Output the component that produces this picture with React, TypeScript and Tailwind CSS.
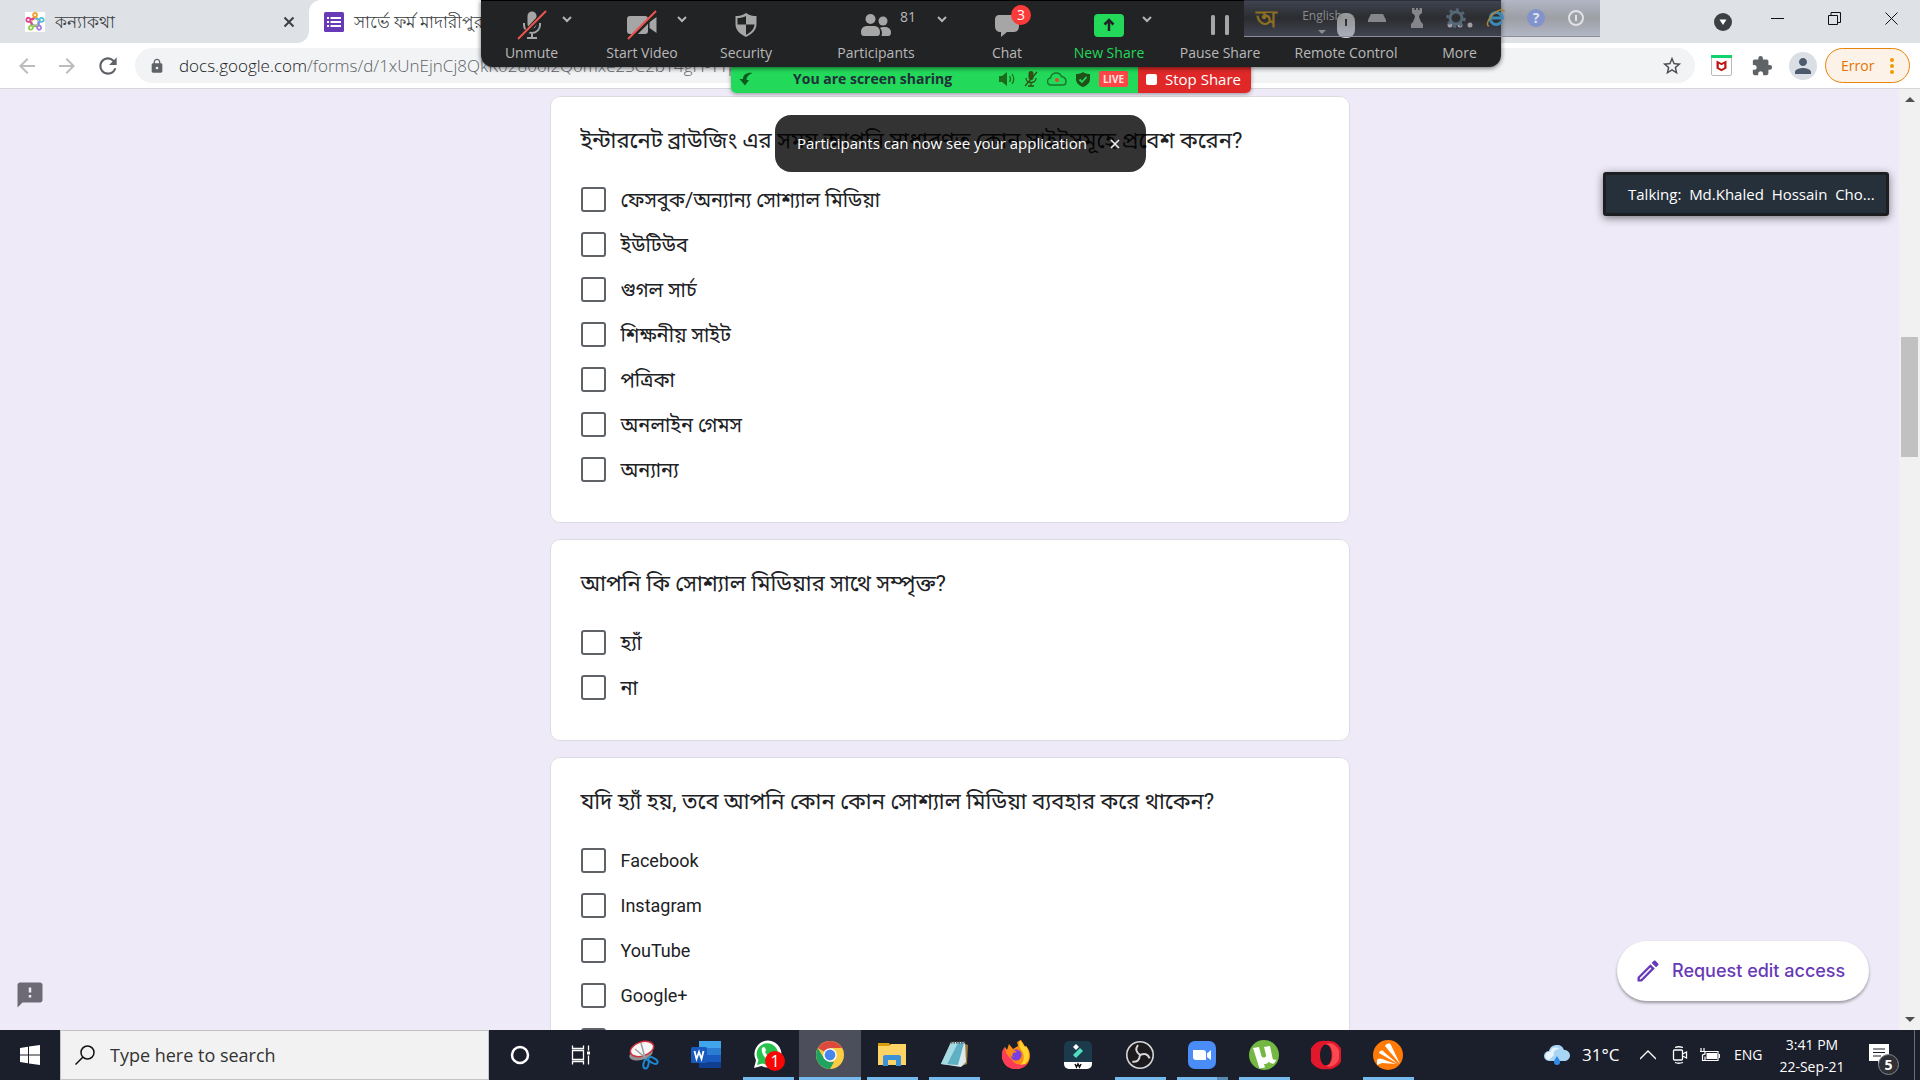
import type { ReactNode } from "react";
import clsx from "clsx";
import {
  MdArrowBack,
  MdArrowForward,
  MdExtension,
  MdFeedback,
  MdLock,
  MdOutlineEdit,
  MdPerson,
  MdRefresh,
  MdStarBorder,
} from "react-icons/md";

type Question = {
  id: string;
  title: string;
  latin?: boolean;
  // ends with an unlabelled free choice
  other?: boolean;
  options: string[];
};

const QUESTIONS: Question[] = [
  {
    id: "sites",
    title: "ইন্টারনেট ব্রাউজিং এর সময় আপনি সাধারণত কোন সাইটসমূহে প্রবেশ করেন?",
    options: [
      "ফেসবুক/অন্যান্য সোশ্যাল মিডিয়া",
      "ইউটিউব",
      "গুগল সার্চ",
      "শিক্ষনীয় সাইট",
      "পত্রিকা",
      "অনলাইন গেমস",
      "অন্যান্য",
    ],
  },
  {
    id: "social",
    title: "আপনি কি সোশ্যাল মিডিয়ার সাথে সম্পৃক্ত?",
    options: ["হ্যাঁ", "না"],
  },
  {
    id: "networks",
    title: "যদি হ্যাঁ হয়, তবে আপনি কোন কোন সোশ্যাল মিডিয়া ব্যবহার করে থাকেন?",
    latin: true,
    other: true,
    options: ["Facebook", "Instagram", "YouTube", "Google+"],
  },
];

/* ---------- Browser ---------- */

function FlowerIcon() {
  const petals = [
    { angle: 0, color: "#f5a02c" },
    { angle: 72, color: "#56bfd6" },
    { angle: 144, color: "#a27be0" },
    { angle: 216, color: "#8fd14a" },
    { angle: 288, color: "#e0408f" },
  ];
  return (
    <svg viewBox="0 0 20 20" className="size-5 bg-white">
      {petals.map((p) => (
        <g key={p.angle} transform={`rotate(${p.angle} 10 10)`} fill="none" stroke={p.color}>
          <circle cx="10" cy="3" r="2" strokeWidth="1.8" />
          <path d="M6.500 8.500Q8.500 7 8.500 5M13.500 8.500Q11.500 7 11.500 5" strokeWidth="2" />
        </g>
      ))}
    </svg>
  );
}

function FormsIcon() {
  return (
    <svg viewBox="0 0 20 20" className="size-5">
      <rect width="20" height="20" rx="1.5" fill="#673ab7" />
      <path d="M3 5h2v2H3zM3 9h2v2H3zM3 13h2v2H3zM6.500 5H17v2H6.500zM6.500 9H17v2H6.500zM6.500 13H17v2H6.500z" fill="#fff" />
    </svg>
  );
}

function TabStrip() {
  return (
    <div className="flex h-[43px] shrink-0 items-stretch bg-white">
      <div className="flex w-[309px] items-center gap-2.5 rounded-br-xl bg-[#dee1e6] pr-2.5 pl-[25px]">
        <FlowerIcon />
        <span className="flex-1 text-[17px] text-[#3c4043]">কন্যাকথা</span>
        <button type="button" aria-label="Close tab" className="p-1">
          <svg viewBox="0 0 12 12" className="size-3" stroke="#3c4043" strokeWidth="2">
            <path d="M1.500 1.500l9 9M10.500 1.500l-9 9" />
          </svg>
        </button>
      </div>
      <div className="bg-[#dee1e6]">
        <div className="flex h-full w-[300px] items-center gap-2.5 overflow-hidden rounded-t-xl bg-white pl-[15px] whitespace-nowrap">
          <FormsIcon />
          <span className="text-[17px] text-[#3c4043]">সার্ভে ফর্ম মাদারীপুর</span>
        </div>
      </div>
      <div className="flex flex-1 items-center justify-end bg-[#dee1e6]">
        <button type="button" aria-label="Search tabs" className="mr-[17px]">
          <svg viewBox="0 0 18 18" className="size-[18px]">
            <circle cx="9" cy="9" r="9" fill="#3c4043" />
            <path d="M5.500 6.500h7L9 12z" fill="#fff" />
          </svg>
        </button>
        <WindowButton label="Minimize">
          <path d="M0 6.500h13" />
        </WindowButton>
        <WindowButton label="Restore">
          <path d="M.5 3.500h9v9h-9zM3 3.500V.5h9.500v10H10" />
        </WindowButton>
        <WindowButton label="Close">
          <path d="M.5.500l12 12M12.500.500l-12 12" />
        </WindowButton>
      </div>
    </div>
  );
}

function WindowButton({ label, children }: { label: string; children: ReactNode }) {
  return (
    <button type="button" aria-label={label} className="flex h-[37px] w-[57px] items-center justify-center self-start">
      <svg viewBox="0 0 13 13" className="size-[13px]" fill="none" stroke="#111" strokeWidth="1">
        {children}
      </svg>
    </button>
  );
}

function Toolbar() {
  return (
    <div className="flex h-[46px] shrink-0 items-center border-b border-[#d5d7da] bg-white pr-2.5 pl-[15px]">
      <button type="button" aria-label="Back" className="mr-4">
        <MdArrowBack className="size-6 text-[#babcbe]" />
      </button>
      <button type="button" aria-label="Forward" className="mr-4">
        <MdArrowForward className="size-6 text-[#babcbe]" />
      </button>
      <button type="button" aria-label="Reload" className="mr-3.5">
        <MdRefresh className="size-[26px] text-[#5f6368]" />
      </button>
      <div className="mr-4 flex h-[35px] min-w-0 flex-1 items-center rounded-full bg-[#f1f3f4] pr-3 pl-3.5">
        <MdLock className="mr-3.5 size-4 shrink-0 text-[#5f6368]" />
        <span className="flex-1 overflow-hidden font-['Open_Sans','Noto_Sans',sans-serif] text-[17px] font-light whitespace-nowrap text-[#5f6368]">
          <span className="text-[#202124]">docs.google.com</span>
          /forms/d/1xUnEjnCj8QkK02806l2Q0mxe2SC2bY4gH-YYpQ
        </span>
        <button type="button" aria-label="Bookmark this page">
          <MdStarBorder className="size-[22px] text-[#4a4d51]" />
        </button>
      </div>
      <button type="button" aria-label="McAfee WebAdvisor" className="mr-[19px]">
        <svg viewBox="0 0 21 21" className="size-[21px]">
          <rect x=".5" y=".5" width="20" height="20" rx="1.500" fill="#fff" stroke="#b9b9b9" />
          <path d="M0 0h21v3H0z" fill="#12d36b" />
          <path d="M5.500 5.500l5 2.500 5-2.500v8l-5 2.800-5-2.800z" fill="#c01818" />
          <path d="M7.800 8.800l2.700 1.400 2.700-1.400v3.600l-2.700 1.600-2.700-1.600z" fill="#fff" />
        </svg>
      </button>
      <button type="button" aria-label="Extensions" className="mr-4">
        <MdExtension className="size-[22px] text-[#5f6368]" />
      </button>
      <button
        type="button"
        aria-label="Profile"
        className="mr-2 flex size-7 items-center justify-center rounded-full bg-[#dadfe5]"
      >
        <MdPerson className="size-6 text-[#4c5a6d]" />
      </button>
      <button
        type="button"
        className="flex h-[35px] w-[85px] items-center justify-between rounded-full border border-[#e8830c] bg-[#fdf2e7] pr-[15px] pl-[15px] font-['Open_Sans','Noto_Sans',sans-serif] text-sm text-[#e37400]"
      >
        Error
        <svg viewBox="0 0 4 16" className="h-4 w-1" fill="#f29900">
          <circle cx="2" cy="2" r="2" />
          <circle cx="2" cy="8" r="2" />
          <circle cx="2" cy="14" r="2" />
        </svg>
      </button>
    </div>
  );
}

/* ---------- Form ---------- */

const checkboxClass =
  "size-[25px] shrink-0 appearance-none rounded-[3px] border-2 border-[#5f6368] bg-white checked:bg-[#673ab7]";

function QuestionCard({ question }: { question: Question }) {
  return (
    <fieldset className="rounded-[10px] border border-[#dadce0] bg-white p-[30px]">
      <legend className="float-left mb-[22px] w-full text-[22px] leading-7 text-[#202124]">{question.title}</legend>
      <div className="clear-both">
        {question.options.map((option) => (
          <label
            key={option}
            className={clsx(
              "flex h-[45px] items-center gap-[15px] text-[#202124]",
              question.latin ? "text-lg" : "text-xl"
            )}
          >
            <input type="checkbox" name={question.id} value={option} className={checkboxClass} />
            {option}
          </label>
        ))}
        {question.other && (
          <div className="flex h-[45px] items-center">
            <input type="checkbox" name={question.id} value="other" aria-label="Other" className={checkboxClass} />
          </div>
        )}
      </div>
    </fieldset>
  );
}

function Scrollbar() {
  return (
    <div className="flex w-[21px] shrink-0 flex-col items-center bg-[#f1f1f1] py-2">
      <svg viewBox="0 0 10 5" className="h-[5px] w-2.5" fill="#505050">
        <path d="M5 0l5 5H0z" />
      </svg>
      <div className="flex-[235]" />
      <div className="h-[120px] w-[17px] bg-[#c1c1c1]" />
      <div className="flex-[560]" />
      <svg viewBox="0 0 10 5" className="h-[5px] w-2.5" fill="#505050">
        <path d="M0 0h10L5 5z" />
      </svg>
    </div>
  );
}

function FormPage() {
  return (
    <div className="relative flex min-h-0 flex-1">
      <main className="min-w-0 flex-1 overflow-hidden bg-[#eeeaf8]">
        <form className="mx-auto flex max-w-[800px] flex-col gap-4 pt-[7px] font-[Roboto,'Noto_Sans_Bengali',sans-serif]">
          {QUESTIONS.map((q) => (
            <QuestionCard key={q.id} question={q} />
          ))}
        </form>
      </main>
      <Scrollbar />
      <button type="button" aria-label="Report a problem" className="absolute bottom-5 left-[15px]">
        <MdFeedback className="size-[30px] text-[#6e6a75]" />
      </button>
      <button
        type="button"
        className="absolute right-[51px] bottom-[29px] flex h-[60px] w-[252px] items-center gap-2.5 rounded-full bg-white pl-[17px] font-[Inter,sans-serif] text-lg font-medium text-[#673ab7] shadow-[0_2px_3px_rgba(0,0,0,0.35)]"
      >
        <MdOutlineEdit className="size-7" />
        Request edit access
      </button>
    </div>
  );
}

/* ---------- Zoom meeting controls ---------- */

function Caret({ className }: { className: string }) {
  return (
    <svg viewBox="0 0 10 7" className={clsx("absolute h-[7px] w-2.5", className)} fill="none" stroke="#b4b4b4" strokeWidth="2">
      <path d="M1 1l4 4 4-4" />
    </svg>
  );
}

type ControlProps = {
  label: string;
  width: string;
  green?: boolean;
  children: ReactNode;
};

function Control({ label, width, green, children }: ControlProps) {
  return (
    <button
      type="button"
      className={clsx("relative flex flex-col items-center pt-2", width, green ? "text-[#23d959]" : "text-[#b9b9b9]")}
    >
      <span className="flex h-8 items-center justify-center">{children}</span>
      <span className="text-sm leading-6 whitespace-nowrap">{label}</span>
    </button>
  );
}

function ZoomToolbar() {
  return (
    <div className="absolute top-0 left-[481px] flex h-[67px] rounded-b-xl border-t border-black bg-[#222325] shadow-[0_1px_5px_rgba(0,0,0,0.6)]">
      <Control label="Unmute" width="w-[101px]">
        <svg viewBox="0 0 30 30" className="size-[30px]" fill="none">
          <rect x="10.500" y="1.500" width="9" height="17" rx="4.500" fill="#a6a6a6" />
          <path d="M7 13v2a8 8 0 0 0 16 0v-2M15 23v5M10 28h10" stroke="#a6a6a6" strokeWidth="2" />
          <path d="M2 30L29 1" stroke="#222325" strokeWidth="5" />
          <path d="M1 29L29 1" stroke="#f2544f" strokeWidth="2" />
        </svg>
        <Caret className="top-[15px] left-[81px]" />
      </Control>
      <Control label="Start Video" width="w-[120px]">
        <svg viewBox="0 0 32 30" className="h-[30px] w-8" fill="#a6a6a6">
          <rect x="1" y="6" width="21" height="18" rx="3" />
          <path d="M23.500 12l7-5v16l-7-5z" />
          <path d="M3 30L31 2" stroke="#222325" strokeWidth="4" />
          <path d="M2 29L30 1" stroke="#f2544f" strokeWidth="2" />
        </svg>
        <Caret className="top-[15px] left-[95px]" />
      </Control>
      <Control label="Security" width="w-[88px]">
        <svg viewBox="0 0 24 26" className="h-[26px] w-6">
          <path d="M12 1c3.500 2.500 7 3 10.500 3v8c0 6-4.500 10-10.500 13C6 22 1.500 18 1.500 12V4C5 4 8.500 3.500 12 1z" fill="#a6a6a6" />
          <path d="M12 4v8.500H3.500V6c3 0 6-.5 8.500-2zM12 12.500h8.500C20 17 17 20.500 12 22.800z" fill="#222325" />
        </svg>
      </Control>
      <Control label="Participants" width="w-[172px]">
        <svg viewBox="0 0 30 24" className="h-6 w-[30px]" fill="#a6a6a6">
          <circle cx="9.500" cy="6" r="5" />
          <circle cx="22" cy="8" r="4.500" />
          <path d="M0 19c0-4 3-6 6-6h7c3 0 6 2 6 6 0 3-1 4-3 4H3c-2 0-3-1-3-4zM20.500 23c1-3 .5-6-1.500-8 1-.7 2-1 3-1h2c3 0 6 2 6 5 0 3-1 4-3 4z" />
        </svg>
        <span className="absolute top-1 left-[110px] text-sm leading-6">81</span>
        <Caret className="top-[15px] left-[147px]" />
      </Control>
      <Control label="Chat" width="w-[90px]">
        <svg viewBox="0 0 26 26" className="size-[26px]" fill="#a6a6a6">
          <path d="M6 3h14c4 0 5 2 5 5v6c0 4-2 6-5 6h-7l-6 5v-5c-4 0-6-2-6-6V8c0-3 1-5 5-5z" />
        </svg>
        <span className="absolute top-1 left-[49px] flex size-5 items-center justify-center rounded-full bg-[#fb3a3a] text-sm text-white">
          3
        </span>
      </Control>
      <Control label="New Share" width="w-[114px]" green>
        <span className="flex h-[23px] w-[30px] items-center justify-center rounded-[4px] bg-[#23d959]">
          <svg viewBox="0 0 12 14" className="h-3.5 w-3" fill="none" stroke="#222325" strokeWidth="2.500">
            <path d="M6 13V2M1.500 6.500L6 2l4.500 4.500" />
          </svg>
        </span>
        <Caret className="top-[15px] left-[90px]" />
      </Control>
      <Control label="Pause Share" width="w-[108px]">
        <svg viewBox="0 0 18 20" className="h-5 w-[18px]" fill="#a6a6a6">
          <rect width="4" height="20" rx="1.500" />
          <rect x="14" width="4" height="20" rx="1.500" />
        </svg>
      </Control>
      <Control label="Remote Control" width="w-[144px]">
        <svg viewBox="0 0 18 25" className="h-[25px] w-[18px]">
          <rect width="18" height="25" rx="8" fill="#d2d2d2" />
          <rect x="8" y="6" width="2" height="7" fill="#222325" />
        </svg>
      </Control>
      <Control label="More" width="w-[83px]">
        <svg viewBox="0 0 26 6" className="h-1.5 w-[26px]" fill="#d2d2d2">
          <circle cx="3" cy="3" r="2.500" />
          <circle cx="13" cy="3" r="2.500" />
          <circle cx="23" cy="3" r="2.500" />
        </svg>
      </Control>
    </div>
  );
}

function ShareStatus() {
  return (
    <div className="absolute top-[67px] left-[731px] flex h-[26px] overflow-hidden rounded-b-[5px] shadow-[0_1px_4px_rgba(0,0,0,0.4)]">
      <div className="flex w-[407px] items-center bg-[#23d959] pr-2.5 pb-0.5 pl-2">
        <svg viewBox="0 0 14 14" className="size-3.5" fill="#0b5a1e">
          <path d="M13.500 1C9 0 4 2 4 7H.5L6 13.500 10 8H7.500c0-3 2-5.500 6-7z" />
        </svg>
        <span className="ml-10 flex-1 text-sm font-bold text-[#20303a]">You are screen sharing</span>
        <div className="flex items-center gap-[9px]">
          <svg viewBox="0 0 16 14" className="h-3.5 w-4" fill="#1c6b1c">
            <path d="M0 4h3l5-4v14L3 10H0z" />
            <path d="M10.500 4q2 3 0 6M13 2q3.500 5 0 10" fill="none" stroke="#1c6b1c" strokeWidth="1.300" />
          </svg>
          <svg viewBox="0 0 14 16" className="h-4 w-3.5" fill="#2f4f14">
            <rect x="4.500" y="0" width="5" height="9" rx="2.500" />
            <path d="M2 7c0 6 10 6 10 0M7 11v4M4 15h6M1 15L13 1" fill="none" stroke="#2f4f14" strokeWidth="1.300" />
          </svg>
          <svg viewBox="0 0 20 14" className="h-3.5 w-5">
            <path d="M4.500 13a3.500 3.500 0 0 1-1-7C4 3 6.500 1 9.500 1c2.500 0 4 1 5 3.500 3 .5 4.500 2.500 4.500 5 0 2-1 3.500-3 3.500z" fill="none" stroke="#187a2b" strokeWidth="1.500" />
            <circle cx="10" cy="8" r="2" fill="#e0492e" />
          </svg>
          <svg viewBox="0 0 14 15" className="h-[15px] w-3.5">
            <path d="M7 0c2 1.500 4.500 2 7 2v5c0 4-3 6.500-7 8-4-1.500-7-4-7-8V2c2.500 0 5-.5 7-2z" fill="#1f5118" />
            <path d="M3.500 7.500L6 10l4.500-5" fill="none" stroke="#23d959" strokeWidth="1.800" />
          </svg>
          <span className="rounded-[2px] bg-[#fd4747] px-1 text-[10px] leading-4 font-bold text-[#ffe3e3]">LIVE</span>
        </div>
      </div>
      <button type="button" className="flex w-[113px] items-center gap-2 bg-[#e02828] pb-0.5 pl-2 text-[15px] whitespace-nowrap text-white">
        <span className="size-[11px] rounded-[2px] bg-white" />
        Stop Share
      </button>
    </div>
  );
}

function LanguageBar() {
  return (
    <div className="absolute top-0 left-[1244px] flex h-[37px] w-[356px] items-center border-b border-[#8b8e96] bg-linear-to-b from-[#6f7896]/40 via-[#3a3b40]/40 to-[#6f7896]/40">
      <span className="w-11 text-center text-2xl leading-6 font-bold text-[#8d6f22]">অ</span>
      <span className="flex w-[68px] flex-col items-center gap-1.5 pt-1.5 text-xs leading-4 text-[#8b8b8f]">
        English
        <svg viewBox="0 0 8 4" className="h-1 w-2" fill="#8b8b8f">
          <path d="M0 0h8L4 4z" />
        </svg>
      </span>
      <span className="flex w-[42px] justify-center">
        <svg viewBox="0 0 18 8" className="h-2 w-[18px]" fill="#85868a">
          <path d="M3 0h12l3 6v2H0V6z" />
        </svg>
      </span>
      <span className="flex w-[38px] justify-center">
        <svg viewBox="0 0 14 20" className="h-5 w-3.5" fill="#85868a">
          <path d="M2 0h2.500v2h1.500V0h2v2h1.500V0H12v5L9.500 7 9 9l2 5 2 2v4H1v-4l2-2 2-5-.5-2L2 5z" />
        </svg>
      </span>
      <span className="flex w-10 justify-center">
        <svg viewBox="0 0 20 20" className="size-5" fill="none" stroke="#566775">
          <circle cx="10" cy="10" r="6" strokeWidth="3" />
          <circle cx="10" cy="10" r="8.500" strokeWidth="2.500" strokeDasharray="3 3.600" />
        </svg>
      </span>
      <span className="flex w-10 justify-center">
        <svg viewBox="0 0 20 20" className="size-5" fill="none">
          <path d="M15.500 13.500a6 6 0 1 1 .8-3.500H5" stroke="#3d87b5" strokeWidth="3" />
          <path d="M3 18C-1 18 3 8 10 4c4-2.500 8-3.500 8 0" stroke="#a98432" strokeWidth="1.500" />
        </svg>
      </span>
      <span className="flex w-10 justify-center">
        <span className="flex size-[18px] items-center justify-center rounded-full bg-[#8293cb] text-sm font-bold text-[#dde2f2]">?</span>
      </span>
      <span className="flex w-10 justify-center">
        <svg viewBox="0 0 16 16" className="size-4" fill="none" stroke="#e1e2e6" strokeWidth="2">
          <circle cx="8" cy="8" r="7" />
          <path d="M8 5v6" />
        </svg>
      </span>
    </div>
  );
}

function ZoomOverlays() {
  return (
    <div className="font-['Open_Sans','Noto_Sans',sans-serif]">
      <ShareStatus />
      <ZoomToolbar />
      <LanguageBar />
      <div
        role="status"
        className="absolute top-[115px] left-[775px] flex h-[57px] w-[371px] items-center rounded-2xl bg-black/80 pl-[22px] text-[15px] whitespace-nowrap text-white"
      >
        <span className="w-[313px]">Participants can now see your application</span>
        <button type="button" aria-label="Dismiss">
          <svg viewBox="0 0 10 10" className="size-2.5" stroke="#eee" strokeWidth="1.600">
            <path d="M1 1l8 8M9 1L1 9" />
          </svg>
        </button>
      </div>
      <div className="absolute top-[172px] right-[31px] flex h-11 w-[286px] items-center rounded-[3px] border-3 border-[#1c1e21] bg-[#26303a] pl-[22px] text-[15px] whitespace-pre text-white shadow-[0_2px_8px_rgba(0,0,0,0.5)]">
        {"Talking:  Md.Khaled  Hossain  Cho..."}
      </div>
    </div>
  );
}

/* ---------- Taskbar ---------- */

type App = {
  name: string;
  state?: "open" | "active" | "stacked";
  badge?: string;
  icon: ReactNode;
};

const APPS: App[] = [
  {
    name: "Cortana",
    icon: <circle cx="15" cy="15" r="8" fill="none" stroke="#fff" strokeWidth="2.500" />,
  },
  {
    name: "Task View",
    icon: (
      <g fill="none" stroke="#fff" strokeWidth="1.300">
        <path d="M5.500 5.500v3h11v-3M5.500 24.500v-3h11v3M5.500 10.500h11v9h-11zM21.500 5.500v5M21.500 15.500v9" />
        <path d="M20 11.500h3v3h-3z" fill="#fff" stroke="none" />
      </g>
    ),
  },
  {
    name: "Snipping Tool",
    icon: (
      <g>
        <ellipse cx="12" cy="14" rx="12" ry="6" fill="#8d9094" transform="rotate(-15 12 14)" />
        <ellipse cx="13" cy="9" rx="12" ry="7" fill="#f7f7f7" stroke="#d12f38" strokeWidth="1.500" transform="rotate(-18 13 9)" />
        <path d="M6 9l12 10M12 3l4 15" stroke="#9a9da1" strokeWidth="1.500" />
        <g fill="none" stroke="#1f86cf" strokeWidth="2">
          <ellipse cx="17" cy="24" rx="2.500" ry="4.500" transform="rotate(12 17 24)" />
          <ellipse cx="24" cy="20.500" rx="2.500" ry="5" transform="rotate(-60 24 20.500)" />
        </g>
      </g>
    ),
  },
  {
    name: "Word",
    icon: (
      <g>
        <path d="M8 1h22v7H8z" fill="#41a5ee" />
        <path d="M8 8h22v7H8z" fill="#2b7cd3" />
        <path d="M8 15h22v7H8z" fill="#185abd" />
        <path d="M8 22h22v6H8z" fill="#103f91" />
        <rect x="0" y="7" width="16" height="16" rx="1.500" fill="#185abd" />
        <path d="M3.500 11l2 8 2.500-7 2.500 7 2-8" fill="none" stroke="#fff" strokeWidth="1.800" />
      </g>
    ),
  },
  {
    name: "WhatsApp",
    state: "open",
    badge: "1",
    icon: (
      <g>
        <path d="M1 28l2-7.500A13.500 13.500 0 1 1 8.500 26z" fill="#fff" />
        <path d="M4 25l1.500-5A10.700 10.700 0 1 1 9.500 23.500z" fill="#25c34b" />
        <path d="M9 8c2-2 3-1 4 2l-1 2c1 2 3 4 5 5l2-1c3 1 3 2 1 4C15 22 7 14 9 8z" fill="#fff" />
      </g>
    ),
  },
  {
    name: "Chrome",
    state: "active",
    icon: (
      <g>
        <circle cx="15" cy="15" r="14" fill="#fccc44" />
        <path d="M15 15L2.900 8A14 14 0 0 1 27.100 8H15z" fill="#db4a3c" />
        <path d="M15 29A14 14 0 0 1 2.900 8L9 18.500 15 22l4 0z" fill="#1ea362" />
        <circle cx="15" cy="15" r="6.800" fill="#fff" />
        <circle cx="15" cy="15" r="5.400" fill="#4787ed" />
      </g>
    ),
  },
  {
    name: "File Explorer",
    state: "open",
    icon: (
      <g>
        <path d="M1 3h11l2 3H1z" fill="#d99a0b" />
        <path d="M1 6h11l2-2h15v21H1z" fill="#fcd364" />
        <path d="M6 26V17c0-1 .5-2 2-2h14c1.500 0 2 1 2 2v9h-5v-6h-8v6z" fill="#3b92d9" />
      </g>
    ),
  },
  {
    name: "Notepad",
    state: "open",
    icon: (
      <g>
        <path d="M26 4l3 1-1 19-5 2z" fill="#9a7a3c" />
        <path d="M12 2h14l1 20-5 5-20-3z" fill="#dbe9ec" />
        <path d="M12 3h13l-6 22-17-1z" fill="#5fb0c4" />
        <path d="M12 3h7L8 24.500 2 24z" fill="#a7dbe4" />
        <path d="M12 2.500h15" stroke="#555" strokeWidth="2" strokeDasharray="1.500 1" />
      </g>
    ),
  },
  {
    name: "Firefox",
    icon: (
      <g>
        <path d="M15 29C7 29 1 23 1 16c0-4 1-7 3-9l2 3 2-6 4 5 5-3-1-4 4-2c2 3 3 4 4 7l1-1c3 3 4 6 4 10 0 7-6 13-14 13z" fill="#ff8a16" />
        <path d="M19 0c2 3 3 5 5 7l1-1c4 7 4 13 0 17-3 4-8 5-11 5 8-3 11-10 7-17-2-3-4-6-2-11z" fill="#ffd62e" />
        <path d="M1 14c0 9 5 15 14 15 6 0 10-3 12-6-6 3-13 2-16-3C8 16 4 15 4 7c-2 2-3 4-3 7z" fill="#fc3b58" />
        <circle cx="15" cy="15" r="5.500" fill="#7a3fe0" />
        <path d="M9 11c2-1 5-1 7 1l-4 1c-1 2-1 3 1 4-3 0-5-3-4-6z" fill="#ff8a16" />
      </g>
    ),
  },
  {
    name: "Filmora",
    icon: (
      <g>
        <rect x="1" y="1" width="28" height="28" rx="5" fill="#1b3b4c" />
        <path d="M1 22h28v2a5 5 0 0 1-5 5H6a5 5 0 0 1-5-5z" fill="#fff" />
        <path d="M10 15l7-7 3 3-7 7z" fill="#4ee0c0" />
        <path d="M10 7l3-3 3 3-3 3z" fill="#fff" />
        <path d="M12 24l1.500 3 1.500-3 1.500 3 1.500-3" fill="none" stroke="#111" strokeWidth="1.500" />
      </g>
    ),
  },
  {
    name: "OBS Studio",
    state: "open",
    icon: (
      <g fill="none" stroke="#d7d7d7">
        <circle cx="15" cy="15" r="13.200" fill="#1c1a1c" strokeWidth="1.600" />
        {[0, 120, 240].map((a) => (
          <path key={a} d="M15 15c-4-3-5-6-2-10" strokeWidth="2" transform={`rotate(${a} 15 15)`} />
        ))}
      </g>
    ),
  },
  {
    name: "Zoom",
    state: "stacked",
    icon: (
      <g>
        <rect x="1" y="1" width="28" height="28" rx="7" fill="#4a8cf8" />
        <path d="M6 10h10c2 0 3 1 3 3v7H9c-2 0-3-1-3-3zM20 13.500l4-3.500v10l-4-3z" fill="#fff" />
      </g>
    ),
  },
  {
    name: "uTorrent",
    state: "open",
    icon: (
      <g>
        <circle cx="15" cy="15" r="15" fill="#74b843" />
        <path d="M4 8l6-1 2.500 9c.8 2.500 5 2 4.500-1L15 7l6-1 2.500 12c.5 2 2 2 4 1.500l-2.500 4c-3 .5-4-.5-5-2-1 2-3 2.500-5 2.500l1 3.500-5.500 1z" fill="#fff" />
      </g>
    ),
  },
  {
    name: "Opera",
    icon: (
      <g fillRule="evenodd">
        <path d="M15 1a14.200 14.200 0 1 0 0 28 14.200 14.200 0 1 0 0-28zm0 3.500c3.500 0 5.500 5 5.500 10.500S18.500 25.500 15 25.500 9 20.500 9 15s2.500-10.500 6-10.500z" fill="#e3172c" />
        <path d="M15 4.500c4-3 10 0 13 6v9c-3 6-9 9-13 6 4 0 6.500-5 6.500-10.500S19 4.500 15 4.500z" fill="#fb4a4f" />
      </g>
    ),
  },
  {
    name: "Avast",
    state: "open",
    icon: (
      <g>
        <circle cx="15" cy="15" r="15" fill="#ff7a06" />
        <path d="M12 6c2-3 5-3 6-1l9 19zM6 13c1-3 4-3 5-1l14 12zM4 21c0-3 3-3 5-2l14 5-14-1-5 2z" fill="#fff" />
      </g>
    ),
  },
];

function TaskbarApp({ app }: { app: App }) {
  return (
    <button
      type="button"
      aria-label={app.name}
      className={clsx(
        "relative flex w-[62px] flex-col items-center justify-between pt-2.5",
        app.state === "active" && "bg-[#4c4f5b]"
      )}
    >
      <svg viewBox="0 0 30 30" className="size-[30px]">
        {app.icon}
      </svg>
      {app.badge && (
        <span className="absolute top-[21px] left-7 flex size-5 items-center justify-center rounded-full bg-[#f90606] text-base leading-5">
          {app.badge}
        </span>
      )}
      {app.state && (
        <span className={clsx("flex h-[3px] justify-end bg-[#76b9ed]", app.state === "active" ? "w-full" : "w-[51px]")}>
          {app.state === "stacked" && <span className="w-[11px] bg-[#5889b3]" />}
        </span>
      )}
    </button>
  );
}

function Taskbar() {
  return (
    <footer className="flex h-[50px] shrink-0 bg-[#1b1e2b] font-['Open_Sans','Noto_Sans',sans-serif] text-white">
      <button type="button" aria-label="Start" className="flex w-[60px] items-center justify-center">
        <svg viewBox="0 0 20 20" className="size-5" fill="#fff">
          <path d="M0 3l8-1.200v7.700H0zM9 1.600L20 0v9.500H9zM0 10.500h8v7.700L0 17zM9 10.500h11V20L9 18.400z" />
        </svg>
      </button>
      <label className="flex w-[429px] items-center gap-[15px] border border-[#c3c3c6] bg-[#f2f2f2] pl-3.5">
        <svg viewBox="0 0 20 20" className="size-5 shrink-0" fill="none" stroke="#111" strokeWidth="1.500">
          <circle cx="12.500" cy="7.500" r="6.500" />
          <path d="M8 12L.5 19.500" />
        </svg>
        <input
          type="text"
          aria-label="Search"
          placeholder="Type here to search"
          className="min-w-0 flex-1 bg-transparent text-lg text-[#222] outline-none placeholder:text-[#333]"
        />
      </label>
      {APPS.map((app) => (
        <TaskbarApp key={app.name} app={app} />
      ))}
      <div className="ml-auto flex items-center">
        <svg viewBox="0 0 26 20" className="mr-3 h-5 w-[26px]">
          <path d="M5 16a5 5 0 0 1 0-10c1-4 4-6 8-6 4 0 6 2 7 5 3 0 6 2 6 5.500S23 16 20 16z" fill="#a9d5f5" />
          <path d="M5 15a4 4 0 0 1 1-8c1-4 5-6 9-3-4 0-6 3-5 6z" fill="#e8f5fd" />
          <path d="M13 11c2 3 3 4 3 6a3 3 0 0 1-6 0c0-2 1-3 3-6z" fill="#2f8be6" />
        </svg>
        <span className="w-[58px] text-[17px]">31°C</span>
        <svg viewBox="0 0 16 10" className="mr-4 h-2.5 w-4" fill="none" stroke="#fff" strokeWidth="1.300">
          <path d="M0 9l8-8 8 8" />
        </svg>
        <svg viewBox="0 0 16 18" className="mr-3 h-[18px] w-4" fill="none" stroke="#fff" strokeWidth="1.300">
          <rect x="1.500" y="4" width="9" height="10" rx="1" />
          <path d="M10.500 8l4-2v6l-4-2M3 1.500Q6.500 0 11 1.500M3 16.500q3.500 1.500 8 0" />
        </svg>
        <svg viewBox="0 0 20 14" className="mr-3.5 h-3.5 w-5">
          <path d="M5.500 3.500H18v9H5v-4M19.500 6v4M1 0v3M4 0v3M0 3.500h5V6L2.500 7v5.500H5" fill="none" stroke="#fff" strokeWidth="1.200" />
          <path d="M6.500 5H17v6H6.500z" fill="#fff" />
        </svg>
        <span className="w-[33px] text-sm">ENG</span>
        <div className="w-[90px] pt-0.5 text-center text-sm leading-[22px] whitespace-nowrap">
          <div>3:41 PM</div>
          <div>22-Sep-21</div>
        </div>
        <button type="button" aria-label="Notifications" className="relative mr-[23px] ml-3">
          <svg viewBox="0 0 22 22" className="size-[22px]">
            <path d="M0 0h20v17h-7l-4 4v-4H0z" fill="#fff" />
            <path d="M4 5h12M4 8.500h12M4 12h8" stroke="#1b1e2b" strokeWidth="1.200" />
          </svg>
          <span className="absolute top-2.5 left-[9px] flex size-[21px] items-center justify-center rounded-full border border-[#85868c] bg-[#2f3136] text-sm font-bold">
            5
          </span>
        </button>
        <span className="mr-[5px] h-[50px] w-px bg-[#6c6e77]" />
      </div>
    </footer>
  );
}

export default function App() {
  return (
    <div className="relative flex h-screen flex-col overflow-hidden font-['Noto_Sans',sans-serif]">
      <TabStrip />
      <Toolbar />
      <FormPage />
      <Taskbar />
      <ZoomOverlays />
    </div>
  );
}
